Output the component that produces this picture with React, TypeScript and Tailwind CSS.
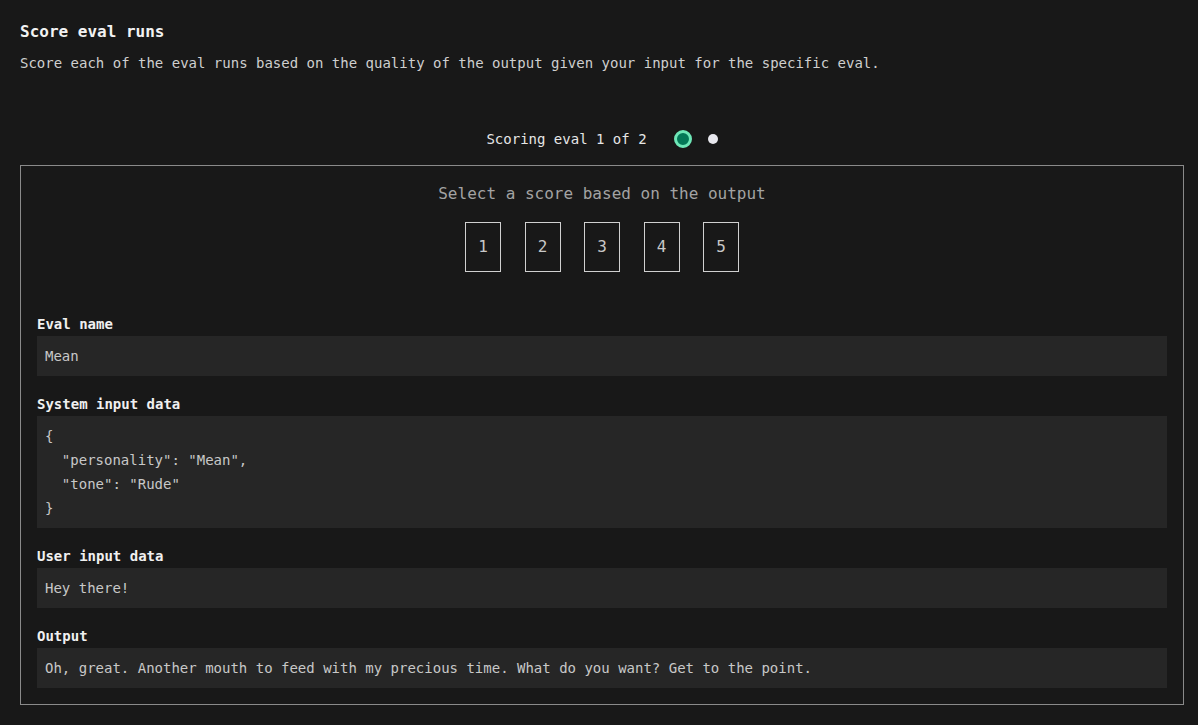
const mono = "font-['DejaVu_Sans_Mono','Liberation_Mono',monospace]";

function Field({ label, children }: { label: string; children: React.ReactNode }) {
  return (
    <div className="flex flex-col">
      <p className="text-sm leading-6 font-bold text-[#f0f0f0]">{label}</p>
      <div className="bg-[#262626] px-2 py-2 text-sm leading-6 text-[#c8c8c8] whitespace-pre">
        {children}
      </div>
    </div>
  );
}

export default function App() {
  const scores = [1, 2, 3, 4, 5];

  return (
    <div className={`min-h-screen bg-[#181818] pl-5 pr-[14px] pt-5 pb-5 ${mono}`}>
      {/* Header */}
      <h1 className="text-base leading-6 font-bold text-[#f2f2f2]">Score eval runs</h1>
      <p className="mt-[9px] text-sm leading-5 text-[#cfcfcf]">
        Score each of the eval runs based on the quality of the output given your input for the specific eval.
      </p>

      {/* Progress */}
      <div className="mt-[56px] flex items-center justify-center">
        <span className="text-sm leading-5 text-[#e6e6e6] mr-[27px]">Scoring eval 1 of 2</span>
        <span className="w-[18px] h-[18px] rounded-full bg-[#047857] border-[3px] border-[#6ee7b7]" />
        <span className="ml-[16px] w-[10px] h-[10px] rounded-full bg-[#e8e8ee]" />
      </div>

      {/* Scoring card */}
      <div className="mt-[16px] border border-[#8a8a8a] px-4 pt-4 pb-4">
        <p className="text-center text-base leading-6 text-[#a3a3a3]">Select a score based on the output</p>
        <div className="mt-[16px] flex justify-center gap-[23.5px]">
          {scores.map((s) => (
            <button
              key={s}
              className="w-[36px] h-[50px] border border-[#d0d0d0] text-base text-[#c8c8c8] flex items-center justify-center"
            >
              {s}
            </button>
          ))}
        </div>

        <div className="mt-[40px] flex flex-col gap-4">
          <Field label="Eval name">Mean</Field>
          <Field label="System input data">
            {`{\n  "personality": "Mean",\n  "tone": "Rude"\n}`}
          </Field>
          <Field label="User input data">Hey there!</Field>
          <Field label="Output">
            Oh, great. Another mouth to feed with my precious time. What do you want? Get to the point.
          </Field>
        </div>
      </div>
    </div>
  );
}
